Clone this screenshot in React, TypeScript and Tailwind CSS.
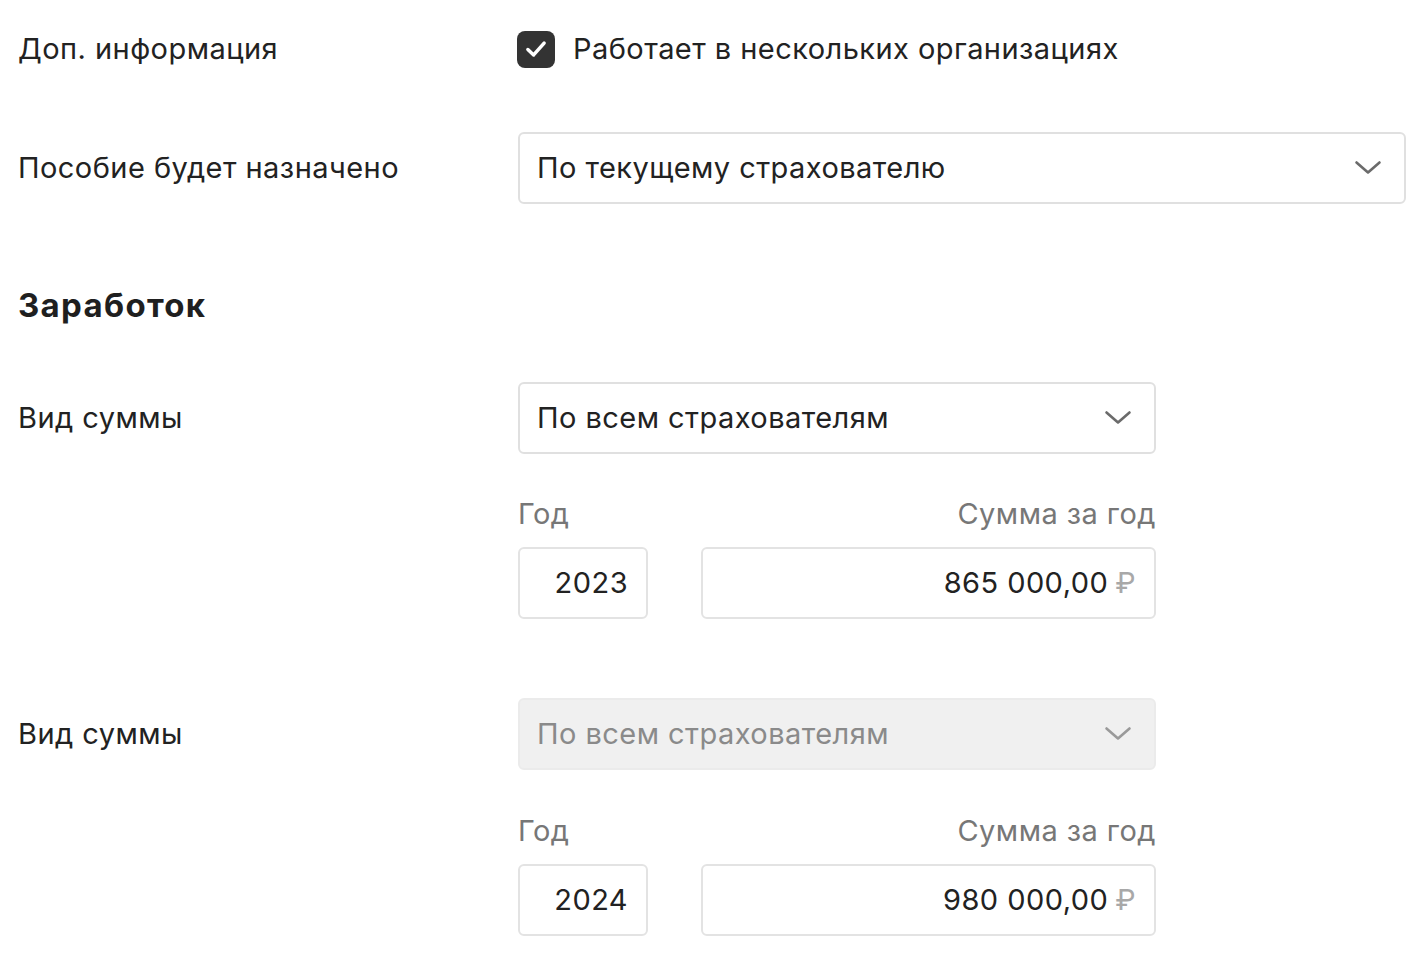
import React from 'react';

const font = { fontFamily: 'Inter, "Noto Sans", sans-serif' };

const Chevron: React.FC<{ muted?: boolean }> = ({ muted }) => (
  <svg width="28" height="16" viewBox="0 0 28 16" fill="none">
    <path
      d="M2.5 2.5 L14 12.5 L25.5 2.5"
      stroke={muted ? '#9a9a9a' : '#6b6b6b'}
      strokeWidth="2.6"
      strokeLinecap="round"
      strokeLinejoin="round"
    />
  </svg>
);

const Select: React.FC<{ value: string; className?: string; disabled?: boolean }> = ({ value, className, disabled }) => (
  <div
    className={`h-[72px] flex items-center justify-between pl-[17px] pr-[22px] rounded-[6px] border-2 ${
      disabled ? 'bg-[#f0f0f0] border-[#ebebeb] text-[#8a8a8a]' : 'bg-white border-[#e0e0e0] text-[#222]'
    } ${className ?? ''}`}
  >
    <span>{value}</span>
    <Chevron muted={disabled} />
  </div>
);

const YearBlock: React.FC<{ year: string; sum: string }> = ({ year, sum }) => (
  <div className="w-[638px]">
    <div className="flex justify-between text-[#777] h-[34px] items-center">
      <span>Год</span>
      <span>Сумма за год</span>
    </div>
    <div className="flex justify-between mt-[16px]">
      <div className="w-[130px] h-[72px] border-2 border-[#e3e3e3] rounded-[6px] flex items-center justify-end pr-[18px] text-[#222]">
        {year}
      </div>
      <div className="w-[455px] h-[72px] border-2 border-[#e3e3e3] rounded-[6px] flex items-center justify-end pr-[18px] text-[#222]">
        <span>{sum}</span>
        <span className="ml-[7px] text-[#a8a8a8]">₽</span>
      </div>
    </div>
  </div>
);

export default function App() {
  return (
    <div className="min-h-[973px] bg-white pl-[18px] pt-[31px] text-[29px] text-[#222] tracking-[0.45px]" style={font}>
      {/* доп. информация */}
      <div className="flex items-center h-[36px]">
        <div className="w-[499px]">Доп. информация</div>
        <div className="flex items-center">
          <div className="w-[38px] h-[37px] rounded-[8px] bg-[#333] flex items-center justify-center">
            <svg width="26" height="26" viewBox="0 0 24 24" fill="none">
              <path d="M4.5 12.5 L9.8 17.5 L19.5 6.5" stroke="white" strokeWidth="3.2" strokeLinecap="round" strokeLinejoin="round" />
            </svg>
          </div>
          <span className="ml-[18px]">Работает в нескольких организациях</span>
        </div>
      </div>

      <div className="flex items-center mt-[65px]">
        <div className="w-[500px]">Пособие будет назначено</div>
        <Select value="По текущему страхователю" className="w-[888px]" />
      </div>

      <h2 className="mt-[82px] h-[40px] flex items-center text-[33px] font-bold text-[#1f1f1f] tracking-[1.3px]">Заработок</h2>

      <div className="flex items-center mt-[56px]">
        <div className="w-[500px]">Вид суммы</div>
        <Select value="По всем страхователям" className="w-[638px]" />
      </div>
      <div className="ml-[500px] mt-[43px]">
        <YearBlock year="2023" sum="865 000,00" />
      </div>

      <div className="flex items-center mt-[79px]">
        <div className="w-[500px]">Вид суммы</div>
        <Select value="По всем страхователям" className="w-[638px]" disabled />
      </div>
      <div className="ml-[500px] mt-[44px]">
        <YearBlock year="2024" sum="980 000,00" />
      </div>
    </div>
  );
}
